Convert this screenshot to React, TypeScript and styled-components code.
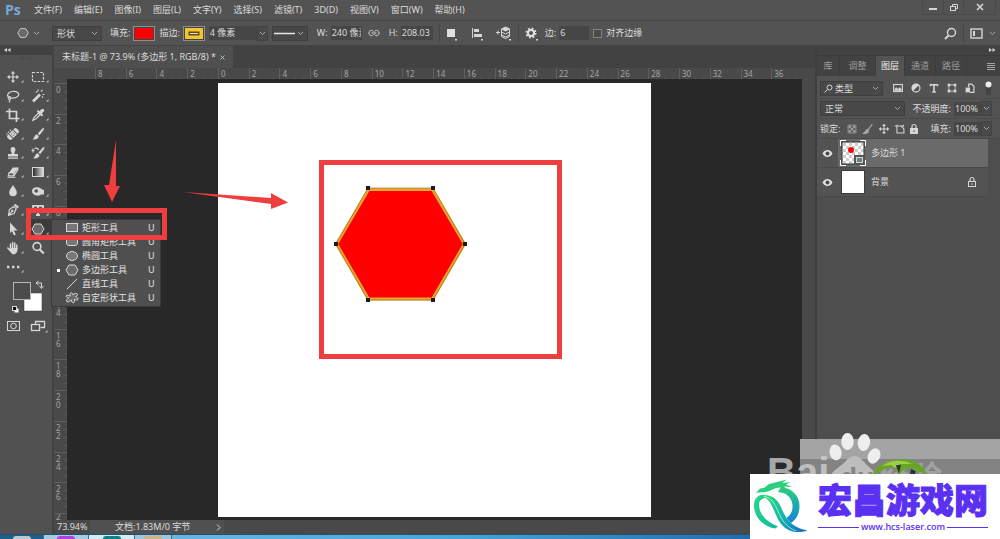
import React from "react";
import styled, { createGlobalStyle } from "styled-components";

const RED = "#ee3e3e";
const ICON = "#d6d6d6";

const GlobalStyle = createGlobalStyle`
  * { box-sizing: border-box; }
  body {
    margin: 0;
    background: #535353;
    color: #dcdcdc;
    font: 9px/14px "Noto Sans", "Noto Sans CJK SC", sans-serif;
  }
  button, input, select { font: inherit; color: inherit; }
  button { background: none; border: 0; padding: 0; }
  svg { display: block; flex: none; }
  ul { margin: 0; padding: 0; list-style: none; }
`;

const Window = styled.div`
  position: relative;
  display: flex;
  flex-direction: column;
  min-height: 100vh;
  overflow: hidden;
`;

/* ---------- menu bar ---------- */

const MenuBar = styled.header`
  display: flex;
  align-items: center;
  height: 21px;
  padding-left: 5px;
  border-bottom: 1px solid #434343;
  white-space: nowrap;
`;

const Brand = styled.span`
  width: 29px;
  color: #78aad8;
  font: bold 14px/20px "Open Sans", sans-serif;
`;

const Menus = styled.nav`
  display: flex;
  flex: 1;
  gap: 12px;
`;

const WindowControls = styled.div`
  display: flex;
  align-self: flex-start;
  margin-right: 4px;
  border: 1px solid #4a4a4a;
  border-top: 0;
`;

const WindowButton = styled.button<{ $wide?: boolean }>`
  display: grid;
  place-items: center;
  width: ${(p) => (p.$wide ? 32 : 20)}px;
  height: 14px;
  & + & { border-left: 1px solid #4a4a4a; }
`;

/* ---------- options bar ---------- */

const OptionsBar = styled.div`
  display: flex;
  align-items: center;
  height: 25px;
  padding: 0 4px 0 16px;
  border-bottom: 1px solid #434343;
  white-space: nowrap;
`;

const Group = styled.div<{ $gap?: number; $ml?: number }>`
  display: flex;
  align-items: center;
  gap: ${(p) => p.$gap ?? 3}px;
  margin-left: ${(p) => p.$ml ?? 0}px;
`;

const Divider = styled.span`
  width: 1px;
  height: 18px;
  margin: 0 6px;
  background: #464646;
`;

const Spacer = styled.span`
  flex: 1;
`;

const SelectFrame = styled.span<{ $w: number }>`
  display: grid;
  align-items: center;
  width: ${(p) => p.$w}px;
  height: 15px;
  background: #484848;
  border: 1px solid #3f3f3f;
  & > * { grid-area: 1 / 1; }
  & > svg { justify-self: end; margin-right: 3px; pointer-events: none; }
`;

const Select = styled.select<{ $pad?: number }>`
  appearance: none;
  width: 100%;
  height: 13px;
  padding: 0 0 0 ${(p) => p.$pad ?? 4}px;
  border: 0;
  background: none;
  line-height: 13px;
  outline: none;
`;

const Field = styled.input<{ $w: number }>`
  width: ${(p) => p.$w}px;
  height: 14px;
  padding: 0 1px;
  border: 0;
  background: #464646;
  line-height: 14px;
  outline: none;
`;

const Arrow = styled.button`
  display: grid;
  place-items: center;
  width: 11px;
  height: 15px;
  background: #4a4a4a;
  border: 1px solid #424242;
`;

const Swatch = styled.button<{ $color: string }>`
  display: grid;
  place-items: center;
  width: 22px;
  height: 15px;
  background: ${(p) => p.$color};
  border: 1px solid #8f8f8f;
  outline: 1px solid #444;
  outline-offset: -2px;
`;

const IconButton = styled.button`
  display: grid;
  place-items: center;
`;

const Check = styled.input`
  appearance: none;
  width: 9px;
  height: 9px;
  margin: 0;
  border: 1px solid #808080;
  background: #4a4a4a;
`;

/* ---------- body ---------- */

const Body = styled.div`
  display: flex;
  flex: 1;
`;

const Toolbox = styled.aside`
  position: relative;
  z-index: 2;
  width: 54px;
  background: #515151;
  border-right: 2px solid #424242;
`;

const Collapse = styled.button<{ $right?: boolean }>`
  display: flex;
  align-items: center;
  justify-content: ${(p) => (p.$right ? "flex-end" : "flex-start")};
  width: 100%;
  height: 9px;
  padding: 0 4px;
  background: #424242;
`;

const Grip = styled.div`
  width: 13px;
  height: 3px;
  margin: 2px 0 7px 19px;
  background: repeating-linear-gradient(90deg, #464646 0 1px, #555 1px 2px);
`;

const ToolGrid = styled.div`
  display: grid;
  grid-template-columns: repeat(2, 25px);
  grid-auto-rows: 19px;
  padding-left: 1px;
`;

const ToolButton = styled.button<{ $active?: boolean }>`
  background: ${(p) => (p.$active ? "#3b3b3b" : "none")};
`;

const ColorArea = styled.button`
  display: block;
  padding-left: 1px;
`;

const Flyout = styled.ul`
  position: absolute;
  left: 51px;
  top: 173px;
  width: 110px;
  padding: 1px 0;
  background: #4f4f4f;
  border: 1px solid #3a3a3a;
`;

const FlyoutItem = styled.button`
  display: grid;
  grid-template-columns: 8px 16px 1fr 12px;
  column-gap: 2px;
  align-items: center;
  width: 100%;
  height: 14px;
  padding-left: 2px;
  text-align: left;
  color: #e2e2e2;
`;

const Bullet = styled.span<{ $on: boolean }>`
  width: 3px;
  height: 3px;
  margin-left: 3px;
  background: ${(p) => (p.$on ? "#fff" : "transparent")};
`;

const ToolMark = styled.div`
  position: absolute;
  left: 26px;
  top: 162px;
  width: 141px;
  height: 32px;
  border: 5px solid ${RED};
  pointer-events: none;
`;

/* ---------- document ---------- */

const DocumentPane = styled.main`
  display: flex;
  flex: 1;
  flex-direction: column;
  min-width: 0;
  background: #424242;
`;

const TabRow = styled.div`
  display: flex;
  height: 22px;
`;

const DocTab = styled.div`
  display: flex;
  align-items: center;
  gap: 4px;
  padding: 0 8px;
  background: #4f4f4f;
  white-space: nowrap;
`;

const RulerTop = styled.div`
  display: grid;
  grid-template-columns: repeat(23, 1fr);
  height: 11px;
  padding: 0 13px 0 41px;
  background: #494949;
`;

const tick = "#5f5f5f";

const CellTop = styled.span`
  padding-left: 2px;
  border-left: 1px solid ${tick};
  color: #a4a4a4;
  font-size: 8px;
  line-height: 12px;
  background:
    repeating-linear-gradient(90deg, transparent 0 7px, ${tick} 7px 8px) bottom / 100% 2px no-repeat;
`;

const Workspace = styled.div`
  display: flex;
  flex: 1;
`;

const RulerLeft = styled.div`
  display: grid;
  grid-template-rows: repeat(14, 1fr) 7px;
  width: 13px;
  padding-top: 4px;
  background: #494949;
`;

const CellLeft = styled.span`
  overflow: hidden;
  min-height: 0;
  border-top: 1px solid ${tick};
  padding: 2px 7px 0 2px;
  color: #a4a4a4;
  font-size: 8px;
  line-height: 8px;
  word-break: break-all;
  background:
    repeating-linear-gradient(180deg, transparent 0 7px, ${tick} 7px 8px) right / 2px 100% no-repeat;
  &:last-child { padding-top: 0; line-height: 6px; }
`;

const Stage = styled.div`
  display: flex;
  flex: 1;
  justify-content: center;
  padding: 4px 0 3px;
  background: #282828;
`;

const Paper = styled.div`
  width: 433px;
  min-height: 434px;
  background: #fff;
  & > svg { overflow: visible; position: relative; z-index: 1; }
`;

const ScrollTrack = styled.div`
  width: 13px;
  background: #494949;
`;

const StatusBar = styled.footer`
  display: flex;
  align-items: center;
  height: 14px;
  padding-left: 3px;
  background: #494949;
  white-space: nowrap;
`;

const Zoom = styled.span`
  width: 33px;
`;

const DocInfo = styled.span`
  display: flex;
  align-items: center;
  justify-content: space-between;
  width: 134px;
  padding: 0 3px 0 25px;
  background: #505050;
`;

/* ---------- panels ---------- */

const Panels = styled.aside`
  display: flex;
  flex-direction: column;
  width: 185px;
  background: #4e4e4e;
  border-left: 2px solid #3e3e3e;
`;

const PanelTabs = styled.div`
  display: flex;
  height: 21px;
  background: #424242;
  border-top: 1px solid #3a3a3a;
`;

const PanelTab = styled.button<{ $active?: boolean; $w: number }>`
  width: ${(p) => p.$w}px;
  color: ${(p) => (p.$active ? "#f0f0f0" : "#9c9c9c")};
  background: ${(p) => (p.$active ? "#535353" : "none")};
  border-right: 1px solid #3c3c3c;
`;

const PanelMenu = styled.button`
  display: grid;
  flex: 1;
  place-items: center end;
  padding-right: 5px;
`;

const PanelRow = styled.div`
  display: flex;
  align-items: center;
  height: 20px;
  padding: 0 8px 0 3px;
  background: #535353;
  border-bottom: 1px solid #4a4a4a;
  white-space: nowrap;
`;

const FilterRow = styled(PanelRow)`
  height: 23px;
  padding-top: 2px;
`;

const Layer = styled.li`
  display: flex;
  height: 29px;
  margin-right: 12px;
  border-bottom: 1px solid #4a4a4a;
  background: #535353;
`;

const Eye = styled.button`
  display: grid;
  place-items: center;
  width: 21px;
`;

const LayerBody = styled.div<{ $active?: boolean }>`
  display: flex;
  flex: 1;
  align-items: center;
  gap: 5px;
  padding: 0 11px 0 2px;
  background: ${(p) => (p.$active ? "#6a6a6a" : "none")};
`;

const LayerName = styled.span`
  flex: 1;
`;

/* ---------- desktop ---------- */

const Taskbar = styled.div`
  display: flex;
  height: 5px;
  background: linear-gradient(90deg, #7cc0e4 0, #4aa6d8 45%, #1f66a8 78%);
  border-top: 1px solid #24506f;
`;

const Task = styled.span<{ $w: number; $bg: string; $mark: string }>`
  display: grid;
  justify-content: center;
  align-items: end;
  width: ${(p) => p.$w}px;
  background: ${(p) => p.$bg};
  border-right: 1px solid #3a7191;
  &::after {
    content: "";
    width: 18px;
    height: 3px;
    border-radius: 6px 6px 0 0;
    background: ${(p) => p.$mark};
  }
`;

const Corner = styled.div`
  position: absolute;
  right: 0;
  bottom: 0;
  z-index: 3;
`;

const SiteCard = styled.a`
  position: absolute;
  right: 0;
  bottom: 0;
  display: flex;
  width: 250px;
  height: 65px;
  background: #fff;
  color: #5a30f2;
  text-decoration: none;
`;

const SiteText = styled.div`
  display: flex;
  flex-direction: column;
  padding: 4px 0 0 1px;
`;

const SiteName = styled.strong`
  font: 900 34px/42px "Noto Sans CJK SC", sans-serif;
  -webkit-text-stroke: 1px #5a30f2;
  white-space: nowrap;
`;

const SiteUrl = styled.span`
  display: grid;
  grid-template-columns: 1fr auto 1fr;
  align-items: center;
  gap: 2px;
  font: 600 9px/14px "Open Sans", sans-serif;
  &::before, &::after {
    content: "";
    height: 1px;
    background: #5a30f2;
  }
`;

/* ---------- icons ---------- */

const Chevron = () => (
  <svg width="7" height="5" viewBox="0 0 7 5" fill="none" stroke="#a9a9a9">
    <path d="M1 1l2.5 2.5L6 1" />
  </svg>
);

const Hexagon = () => <path d="M5 3h6l3 5-3 5H5L2 8z" fill="#6a6a6a" stroke={ICON} />;

const line = { fill: "none", stroke: ICON, strokeWidth: 1.2 };

const MoveGlyph = () => (
  <path
    fill={ICON}
    d="M8 2l2.2 2.6H8.6v2.8h2.8V5.8L14 8l-2.6 2.2V8.6H8.6v2.8h1.6L8 14l-2.2-2.6h1.6V8.6H4.6v1.6L2 8l2.6-2.2v1.6h2.8V4.6H5.8z"
  />
);

const tools: { label: string; icon: React.ReactNode; corner?: boolean; active?: boolean }[] = [
  { label: "移动工具", icon: <MoveGlyph /> },
  { label: "矩形选框工具", icon: <rect x="2.5" y="3.5" width="11" height="9" {...line} strokeDasharray="2.5 1.4" /> },
  {
    label: "套索工具",
    icon: (
      <g {...line}>
        <path d="M4.5 9.8C1.5 8.5 2 4.5 7 3.5c5-.8 8 1.8 6.2 4.3C11.5 10.2 7.5 10.5 5 9.5" />
        <circle cx="4.5" cy="10" r="1.3" />
        <path d="M4.5 11.5c.8 1 .3 2-.5 2.8" />
      </g>
    ),
  },
  {
    label: "魔棒工具",
    icon: (
      <g stroke={ICON} fill="none">
        <path d="M3 13.5L10 6.5" strokeWidth="2.6" />
        <path d="M8 1.5v2M12.5 2L11 3.5M14.5 6.5h-2M6 3.5l1 1M13 9.5l-1-1" strokeWidth="1.2" />
      </g>
    ),
  },
  { label: "裁剪工具", icon: <path d="M1 4.5h10.5V15M4.5 1.5v10H14.5" {...line} strokeWidth="1.7" /> },
  {
    label: "吸管工具",
    icon: (
      <g>
        <path d="M9 5.5L4 10.5 2.8 13.4 5.7 12l5-4.8" {...line} />
        <path d="M8 4.2L12 8.2" stroke={ICON} strokeWidth="2" strokeLinecap="round" />
        <path d="M10 6L12.6 3.4" stroke={ICON} strokeWidth="3.2" strokeLinecap="round" />
      </g>
    ),
  },
  {
    label: "修复画笔工具",
    icon: (
      <g transform="rotate(-45 8 8)">
        <rect x="1.5" y="5" width="13" height="6" rx="2" fill={ICON} />
        <path d="M5 5v6M11 5v6" stroke="#515151" />
        <path d="M6.8 7h.8M8.8 7h.8M6.8 9h.8M8.8 9h.8" stroke="#515151" />
        <path d="M3 3.5h7" stroke={ICON} strokeDasharray="1.5 1" />
      </g>
    ),
  },
  {
    label: "画笔工具",
    icon: (
      <path
        fill={ICON}
        d="M13.8 2.2c.6.5.2 1.2-.2 1.8L9.5 9.2 7.8 7.6l4.6-5c.5-.5 1-.7 1.4-.4zM7 8.2l1.8 1.7c0 2.6-2.8 4-6.3 3.3C4.7 12.2 4 9 7 8.2z"
      />
    ),
  },
  {
    label: "仿制图章工具",
    icon: (
      <path fill={ICON} d="M8 2a2.5 2.5 0 0 1 2.3 3.5L9.3 8v1H13v2.5H3V9h3.7V8l-1-2.5A2.5 2.5 0 0 1 8 2zM3 12.5h10v1.2H3z" />
    ),
  },
  {
    label: "历史记录画笔工具",
    icon: (
      <g>
        <path
          fill={ICON}
          d="M14.3 2.2c.5.5.2 1.2-.2 1.8l-4 5.2-1.7-1.6 4.5-5c.5-.5 1-.7 1.4-.4zM7.6 8.2l1.8 1.7c0 2.6-2.8 4-6.3 3.3C5.3 12.2 4.6 9 7.6 8.2z"
        />
        <path d="M1.5 5.5h3M4.5 3.5C6.5 2.8 8 3.5 8.5 5M3 3.5v4" {...line} />
      </g>
    ),
  },
  {
    label: "橡皮擦工具",
    icon: (
      <g>
        <path d="M7.8 3.5h5L8.8 9h-5z" fill={ICON} />
        <path d="M12.8 3.5v2.3L8.8 11.8h-5.5L3.8 9h5l4-5.5M8.8 9v2.8" {...line} />
        <path d="M2.5 13.3h8" stroke={ICON} />
      </g>
    ),
  },
  { label: "渐变工具", icon: <rect x="2.5" y="3.5" width="11" height="9" fill="url(#ramp)" stroke={ICON} /> },
  { label: "模糊工具", icon: <path fill={ICON} d="M8 2c1.5 2.8 3.8 4.8 3.8 7.5a3.8 3.8 0 0 1-7.6 0C4.2 6.8 6.5 4.8 8 2z" /> },
  {
    label: "海绵工具",
    icon: (
      <path
        fill={ICON}
        fillRule="evenodd"
        d="M2 7.5C2.5 4.5 6 3.5 9 4.5c2 .7 3.5 2.5 5 2.5v4.5h-3l-1 1H6C3.5 12 1.7 10 2 7.5zM6.2 6.2a1.8 1.8 0 1 0 0 3.6 1.8 1.8 0 0 0 0-3.6z"
      />
    ),
  },
  {
    label: "钢笔工具",
    icon: (
      <g transform="rotate(40 8 8)">
        <path d="M8 15L5 10l1.3-5h3.4L11 10z M8 15v-5" {...line} />
        <circle cx="8" cy="9" r="1.2" fill={ICON} />
        <path d="M5.5 2.8h5" stroke={ICON} strokeWidth="2" />
      </g>
    ),
  },
  { label: "文字工具", icon: <path d="M3 6V3.8h10V6M8 4v9M6 13h4" fill="none" stroke={ICON} strokeWidth="1.8" /> },
  { label: "路径选择工具", icon: <path fill={ICON} d="M5 1.5l7.5 8H8.8l2 4-1.8.9-2-4.2L5 12z" /> },
  { label: "多边形工具", icon: <Hexagon />, active: true },
  {
    label: "抓手工具",
    icon: (
      <g>
        <path
          d="M5.5 9.5V4M7.6 8V2.5M9.7 8V3M11.8 9V5M5.5 11L2.8 8"
          fill="none"
          stroke={ICON}
          strokeWidth="1.5"
          strokeLinecap="round"
        />
        <path d="M5 8h7.5c.3 3-1 6-3.2 6.3-2 .3-3-.8-4.3-3.3z" fill={ICON} />
      </g>
    ),
  },
  {
    label: "缩放工具",
    corner: false,
    icon: (
      <g {...line} strokeWidth="1.6">
        <circle cx="7" cy="6.5" r="3.9" />
        <path d="M9.8 9.5l4 4" strokeWidth="2.2" />
      </g>
    ),
  },
  { label: "编辑工具栏", icon: <path d="M2 8h2.4M7 8h2.4M12 8h2.4" stroke={ICON} strokeWidth="2.4" /> },
];

const Tool = ({ label, icon, corner = true, active }: (typeof tools)[number]) => (
  <ToolButton aria-label={label} $active={active}>
    <svg width="24" height="19" viewBox="0 0 24 19">
      <g transform="translate(4 2)">{icon}</g>
      {corner && <path d="M22.5 13v2.5H20z" fill="#bdbdbd" />}
    </svg>
  </ToolButton>
);

const shapes = [
  { label: "矩形工具", icon: <rect x="2.5" y="3.5" width="11" height="8" fill="#777" stroke={ICON} /> },
  { label: "圆角矩形工具", icon: <rect x="2.5" y="3.5" width="11" height="8" rx="2.5" fill="#777" stroke={ICON} /> },
  { label: "椭圆工具", icon: <ellipse cx="8" cy="8" rx="5.5" ry="4.5" fill="#777" stroke={ICON} /> },
  { label: "多边形工具", icon: <Hexagon /> },
  { label: "直线工具", icon: <path d="M3 13L13 3" stroke={ICON} /> },
  {
    label: "自定形状工具",
    icon: (
      <path
        d="M6.500 3.200c1-1 2-.3 2.300 1.600 1.500-1.500 4.200-1.800 4.700-.6.4 1-.6 1.800-1.900 2.500 1.800.6 2.900 1.800 2.300 2.900-.7 1-2.300.3-3.600-.5.500 1.700.2 3.600-1 3.700-1.300 0-1.800-1.400-2-2.900-1.300 1.400-3.700 2.800-4.700 1.700-.9-1 .6-2.500 2-3.500-1.500-.5-2.800-1.300-2.300-2.400.600-1 2.400-.4 4 .4-.3-1.100-.4-2.300.2-2.900z"
        fill="#6a6a6a"
        stroke={ICON}
      />
    ),
  },
];

const EyeIcon = () => (
  <svg width="11" height="9" viewBox="0 0 11 9">
    <path d="M.5 4.5C2 1.8 3.7 1 5.500 1s3.500.8 5 3.500C9 7.200 7.300 8 5.500 8S2 7.200.5 4.500z" fill="#e2e2e2" />
    <circle cx="5.5" cy="4.5" r="2" fill="#4b4b4b" />
  </svg>
);

const Lock = ({ solid }: { solid?: boolean }) => (
  <svg width="10" height="12" viewBox="0 0 10 12" fill="none" stroke={ICON}>
    <path d="M3 5.5V3.5a2 2 0 0 1 4 0v2" strokeWidth="1.2" />
    <rect x="1.5" y="5.5" width="7" height="5" fill={solid ? ICON : "none"} />
    <path d="M5 7.2v1.8" stroke={solid ? "#535353" : ICON} />
  </svg>
);

const Svg14 = ({ children }: { children: React.ReactNode }) => (
  <svg width="14" height="14" viewBox="0 0 16 16">{children}</svg>
);

const Dragon = () => (
  <svg width="67" height="65" viewBox="0 0 67 65">
    <defs>
      <linearGradient id="wing" x1="0" y1="0" x2="1" y2="1">
        <stop offset="0" stopColor="#2fdc74" />
        <stop offset=".5" stopColor="#12b7a8" />
        <stop offset="1" stopColor="#1769d2" />
      </linearGradient>
      <linearGradient id="loop" x1="0" y1="0" x2="1" y2="1">
        <stop offset="0" stopColor="#25d98a" />
        <stop offset="1" stopColor="#12b89c" />
      </linearGradient>
      <linearGradient id="ring" x1="0" y1="0" x2="0" y2="1">
        <stop offset="0" stopColor="#27cf7c" />
        <stop offset="1" stopColor="#1484dc" />
      </linearGradient>
    </defs>
    <path d="M31 13c11 1 18.500 9 18.500 19 0 8-3.500 13.500-8.500 17l-4.500-5c4-3 6.500-7 6-12.500C42 24 37 18.500 28 18z" fill="url(#ring)" />
    <path
      d="M6 19l4-4.500 4-.5 5-4 6-1.500 12-3-5 3.500 8-1-4 2.500 6 2.500-8-.5 3 3.500-7-2.500c-6 0-9 3.500-14 4.500-4 .5-6 0-10 1z"
      fill="#2bcf7d"
    />
    <path d="M15 21C8 20 3.500 25 4 32.500 4.500 43 13 52.500 25 54.500l3-2C17 48 9.500 41 9 31c-.3-3.500 2-6.500 6-7z" fill="url(#loop)" />
    <path d="M14 21c9 0 14 5 17 12 4 10 9 20 26.500 23.500C46 60.500 35 57 29 47 24 38.500 22 27 14 23z" fill="url(#wing)" />
    <path d="M14 22.500c7 1 10.500 7 13.500 13.500C31.500 46 36 53 46 57" fill="none" stroke="#bff3e4" strokeWidth=".8" />
  </svg>
);

const Watermark = () => (
  <svg width="250" height="110" viewBox="750 429 250 110">
    <rect x="800" y="439" width="200" height="20" fill="#a4a4a4" />
    <rect x="800" y="459" width="200" height="16" fill="#838383" />
    <g fill="#d2d2d2" fontWeight="bold">
      <text x="767" y="486" fontSize="40" fillOpacity=".75" fontFamily="Liberation Sans">Bai</text>
      <text x="880" y="488" fontSize="31" fillOpacity=".4" fontFamily="Noto Sans CJK SC">经验</text>
    </g>
    <g fill="#eee">
      <ellipse cx="835.5" cy="452.5" rx="6" ry="8" transform="rotate(-12 835 452)" />
      <ellipse cx="847.5" cy="441.5" rx="6.2" ry="8.5" />
      <ellipse cx="864" cy="442.5" rx="6.2" ry="8.5" transform="rotate(8 864 442)" />
      <ellipse cx="874" cy="456" rx="6" ry="8" transform="rotate(28 874 456)" />
      <path d="M830 478c2-8 10-11 15-16 6-8 13-8 19 0 4 5 11 8 13 16z" fill="#bdbdbd" />
    </g>
    <text x="840" y="487" fontSize="28" fontWeight="bold" fill="#858585" fontFamily="Liberation Sans">du</text>
    <path d="M872 475c4-9 13-14 24-15 14-3 26 3 31 14l-10-3-5-3-7 1-6 5-5-7-9 2z" fill="#68a526" />
    <path d="M882 466c8-6 20-7 30-2l-12 0-5 4-4-3z" fill="#9ccc48" />
    <path d="M896 465l5 0-2 9zM911 469l5 2-1 4h-5z" fill="#26382f" />
  </svg>
);

/* ---------- page ---------- */

const menus = ["文件(F)", "编辑(E)", "图像(I)", "图层(L)", "文字(Y)", "选择(S)", "滤镜(T)", "3D(D)", "视图(V)", "窗口(W)", "帮助(H)"];
const topNumbers = Array.from({ length: 23 }, (_, i) => Math.abs(i * 2 - 8));
const leftNumbers = [0, 2, 4, 6, 8, 10, 12, 14, 16, 18, 20, 22, 24, 26];
const anchors = [[150, 105], [215, 105], [247, 161], [215, 217], [150, 217], [118, 161]];

export default function App() {
  return (
    <Window>
      <GlobalStyle />
      <MenuBar>
        <Brand>Ps</Brand>
        <Menus>
          {menus.map((m) => (
            <button key={m}>{m}</button>
          ))}
        </Menus>
        <WindowControls>
          <WindowButton aria-label="最小化">
            <svg width="8" height="8"><path d="M0 6h8" stroke={ICON} strokeWidth="2" /></svg>
          </WindowButton>
          <WindowButton aria-label="还原">
            <svg width="10" height="9" fill="none" stroke={ICON}>
              <path d="M3.5 3V1.5h5v4H7" /><rect x="1.5" y="3.5" width="5" height="4" />
            </svg>
          </WindowButton>
          <WindowButton aria-label="关闭" $wide>
            <svg width="8" height="8"><path d="M1 1l6 6M7 1L1 7" stroke={ICON} strokeWidth="1.6" /></svg>
          </WindowButton>
        </WindowControls>
      </MenuBar>

      <OptionsBar>
        <IconButton aria-label="多边形工具"><Svg14><Hexagon /></Svg14></IconButton>
        <Group $ml={3}><Chevron /></Group>
        <Group $ml={12}>
          <SelectFrame $w={50}>
            <Select aria-label="工具模式" defaultValue="形状"><option>形状</option></Select>
            <Chevron />
          </SelectFrame>
        </Group>
        <Group $ml={8}>填充: <Swatch aria-label="填充" $color="#f00" /></Group>
        <Group $ml={4}>
          描边:
          <Swatch aria-label="描边" $color="#f5c62c">
            <svg width="12" height="5"><rect x=".5" y=".5" width="11" height="4" fill="#5a4a30" /><path d="M2 2.500h8" stroke="#f3e3b0" /></svg>
          </Swatch>
        </Group>
        <Group $ml={4} $gap={0}>
          <Field $w={48} aria-label="描边宽度" defaultValue="4 像素" />
          <Arrow aria-label="宽度选项"><Chevron /></Arrow>
        </Group>
        <Group $ml={4}>
          <SelectFrame $w={36}>
            <svg width="31" height="5"><path d="M1 2.500h21" stroke="#e8e8e8" strokeWidth="1.5" /></svg>
            <Select aria-label="描边类型" defaultValue=""><option value="" /></Select>
            <Chevron />
          </SelectFrame>
        </Group>
        <Group $ml={9}>
          <label htmlFor="w">W:</label>
          <Field $w={31} id="w" defaultValue="240 像素" />
        </Group>
        <Group $ml={6}>
          <IconButton aria-label="链接宽高">
            <svg width="12" height="8" viewBox="0 0 12 8" fill="none" stroke={ICON}>
              <path d="M5.5 2.5C4 .5 1 1 1 4s3 3.500 4.500 1.500M6.500 2.500C8 .5 11 1 11 4S8 7.500 6.500 5.500M3.500 4h5" />
            </svg>
          </IconButton>
        </Group>
        <Group $ml={9}>
          <label htmlFor="h">H:</label>
          <Field $w={32} id="h" defaultValue="208.03 像素" />
        </Group>
        <Divider />
        <Group $gap={12}>
          <IconButton aria-label="路径操作">
            <svg width="12" height="15"><rect x="1" y="3" width="8" height="8" fill="#e0e0e0" /><path d="M9 13h2v1.500H9z" fill={ICON} /></svg>
          </IconButton>
          <IconButton aria-label="路径对齐方式">
            <svg width="14" height="15">
              <path d="M2.500 2v10" stroke={ICON} /><path d="M4 3h5v3H4zM4 8h8v3H4z" fill={ICON} /><path d="M11 13h2v1.500h-2z" fill={ICON} />
            </svg>
          </IconButton>
          <IconButton aria-label="路径排列方式">
            <svg width="16" height="15" fill="none" stroke={ICON}>
              <path d="M0 6.500h4M2 4.500v4" />
              <path d="M5.500 3L9.500 1l4 2-4 2z" fill={ICON} />
              <path d="M5.500 3v3l4 2 4-2V3M5.500 6v3l4 2 4-2V6M5.500 9v1.500l4 2 4-2V9" />
              <path d="M13 13h2v1.500h-2z" fill={ICON} stroke="none" />
            </svg>
          </IconButton>
        </Group>
        <Divider />
        <IconButton aria-label="几何选项">
          <svg width="14" height="15" fill="none" stroke="#e0e0e0">
            <circle cx="6" cy="7" r="3" strokeWidth="2" /><circle cx="6" cy="7" r="4.5" strokeWidth="2" strokeDasharray="1.8 1.73" />
            <path d="M11 13h2v1.500h-2z" fill={ICON} stroke="none" />
          </svg>
        </IconButton>
        <Group $ml={6}>
          <label htmlFor="sides">边:</label>
          <Field $w={30} id="sides" defaultValue="6" />
        </Group>
        <Group $ml={4} $gap={4}>
          <Check type="checkbox" id="align" />
          <label htmlFor="align">对齐边缘</label>
        </Group>
        <Spacer />
        <IconButton aria-label="搜索">
          <svg width="13" height="13" fill="none" stroke={ICON}>
            <circle cx="7.5" cy="5.5" r="4" strokeWidth="1.4" /><path d="M4.5 8.5L1 12" strokeWidth="2" />
          </svg>
        </IconButton>
        <Divider />
        <Group $gap={6}>
          <IconButton aria-label="工作区">
            <svg width="13" height="11"><rect x="1" y="1" width="11" height="9" fill="none" stroke={ICON} strokeWidth="1.4" /><path d="M3 3h2v5H3z" fill={ICON} /></svg>
          </IconButton>
          <Chevron />
        </Group>
      </OptionsBar>

      <Body>
        <Toolbox>
          <Collapse aria-label="折叠工具栏">
            <svg width="7" height="5" fill={ICON}><path d="M3 0v4L0 2zM6.500 0v4l-3-2z" /></svg>
          </Collapse>
          <Grip />
          <ToolGrid>
            {tools.map((t) => (
              <Tool key={t.label} {...t} />
            ))}
          </ToolGrid>
          <ColorArea aria-label="前景色和背景色">
            <svg width="50" height="60" viewBox="1 276 50 60">
              <defs>
                <linearGradient id="ramp"><stop offset="0" stopColor="#222" /><stop offset="1" stopColor="#e8e8e8" /></linearGradient>
              </defs>
              <rect x="24" y="293" width="18" height="18" fill="#fff" stroke="#3c3c3c" strokeWidth=".5" />
              <rect x="13.5" y="282.5" width="17" height="17" fill="#4c4c4c" stroke="#b5b5b5" />
              <path d="M37 283h4.500v4.500M38.500 281l-2.500 2 2.500 2M39.500 286l2 2.500 2-2.500" fill="none" stroke={ICON} />
              <rect x="14.5" y="308.5" width="4" height="4" fill="#fff" />
              <rect x="12.5" y="306.5" width="4" height="4" fill="#111" stroke={ICON} />
              <rect x="7.5" y="321.5" width="12" height="9" fill="none" stroke={ICON} />
              <circle cx="13.5" cy="326" r="2.8" fill="none" stroke={ICON} />
              <path d="M35.500 324v-2.500h9v6h-4" fill="none" stroke={ICON} strokeWidth="1.3" />
              <rect x="31.5" y="324.5" width="8" height="6" fill="#515151" stroke={ICON} strokeWidth="1.3" />
              <path d="M47.500 330v2.500H45z" fill="#bdbdbd" />
            </svg>
          </ColorArea>
          <Flyout>
            {shapes.map((s) => (
              <li key={s.label}>
                <FlyoutItem>
                  <Bullet $on={s.label === "多边形工具"} />
                  <svg width="16" height="14" viewBox="0 1 16 14">{s.icon}</svg>
                  <span>{s.label}</span>
                  <span>U</span>
                </FlyoutItem>
              </li>
            ))}
          </Flyout>
          <ToolMark />
        </Toolbox>

        <DocumentPane>
          <TabRow>
            <DocTab>
              <span>未标题-1 @ 73.9% (多边形 1, RGB/8) *</span>
              <IconButton aria-label="关闭文档">
                <svg width="5" height="5"><path d="M.5.5l4 4M4.500.5l-4 4" stroke="#c0c0c0" /></svg>
              </IconButton>
            </DocTab>
          </TabRow>
          <RulerTop>
            {topNumbers.map((n, i) => (
              <CellTop key={i}>{n}</CellTop>
            ))}
          </RulerTop>
          <Workspace>
            <RulerLeft>
              {leftNumbers.map((n) => (
                <CellLeft key={n}>{n}</CellLeft>
              ))}
              <CellLeft>2</CellLeft>
            </RulerLeft>
            <Stage>
              <Paper>
                <svg width="433" height="434" viewBox="0 0 433 434">
                  <path d="M150.500 106.500h64l32 54.500-32 55h-64L118.500 161z" fill="#f00" stroke="#e8a62c" strokeWidth="3" />
                  <path d="M150 105h65l32 56-32 56h-65l-32-56z" fill="none" stroke="#8a6a2c" strokeWidth=".6" />
                  {anchors.map(([x, y]) => (
                    <rect key={`${x}-${y}`} x={x - 2} y={y - 2} width="4" height="4" fill="#1c1c1c" />
                  ))}
                  <rect x="103.5" y="79.5" width="238" height="194" fill="none" stroke={RED} strokeWidth="5" />
                  <path d="M-35 109L53 115v-5l17 9.500L53 126v-5z" fill={RED} />
                  <path d="M-102 57L-102 103h4l-8 16-8-17h5z" fill={RED} />
                </svg>
              </Paper>
            </Stage>
            <ScrollTrack />
          </Workspace>
          <StatusBar>
            <Zoom>73.94%</Zoom>
            <DocInfo>
              文档:1.83M/0 字节
              <svg width="5" height="7" fill="none" stroke={ICON}><path d="M1 .5l3 3-3 3" /></svg>
            </DocInfo>
          </StatusBar>
        </DocumentPane>

        <Panels>
          <Collapse $right aria-label="折叠面板">
            <svg width="7" height="5" fill={ICON}><path d="M0 0v4l3-2zM3.500 0v4l3-2z" /></svg>
          </Collapse>
          <PanelTabs>
            <PanelTab $w={23}>库</PanelTab>
            <PanelTab $w={36}>调整</PanelTab>
            <PanelTab $w={29} $active>图层</PanelTab>
            <PanelTab $w={31}>通道</PanelTab>
            <PanelTab $w={31}>路径</PanelTab>
            <PanelMenu aria-label="面板菜单">
              <svg width="8" height="7" fill="none"><path d="M0 .5h8M0 2.500h8M0 4.500h8M0 6.500h8" stroke="#a5a5a5" /></svg>
            </PanelMenu>
          </PanelTabs>
          <FilterRow>
            <SelectFrame $w={63}>
              <svg width="58" height="9" fill="none" stroke={ICON}><circle cx="8.5" cy="3.5" r="2.5" /><path d="M6.500 5.500l-3 3" /></svg>
              <Select $pad={14} aria-label="图层过滤" defaultValue="类型"><option>类型</option></Select>
              <Chevron />
            </SelectFrame>
            <Group $ml={8} $gap={4}>
              <IconButton aria-label="像素图层">
                <Svg14><rect x="3" y="4" width="10" height="8" fill="none" stroke={ICON} strokeWidth="1.3" /><path d="M4 11V9l2-2 2 2 2-2 2 2v2z" fill={ICON} /></Svg14>
              </IconButton>
              <IconButton aria-label="调整图层">
                <Svg14><circle cx="8" cy="8" r="4.5" fill="none" stroke={ICON} strokeWidth="1.3" /><path d="M11.5 4.5A4.8 4.8 0 1 0 4.5 11.5z" fill={ICON} /></Svg14>
              </IconButton>
              <IconButton aria-label="文字图层">
                <Svg14><path d="M4 6V4.200h8V6M8 4v9M6 12.500h4" fill="none" stroke={ICON} strokeWidth="1.8" /></Svg14>
              </IconButton>
              <IconButton aria-label="形状图层">
                <Svg14><path d="M4.500 4.500h7v7h-7z" fill="none" stroke={ICON} /><path d="M3 3h3v3H3zM10 3h3v3h-3zM3 10h3v3H3zM10 10h3v3h-3z" fill={ICON} /></Svg14>
              </IconButton>
              <IconButton aria-label="智能对象">
                <Svg14><path d="M6.500 7V3.500h3.500L12.500 6v7H8" fill="none" stroke={ICON} strokeWidth="1.3" /><path d="M3 7.500h5V13H3z" fill={ICON} /></Svg14>
              </IconButton>
            </Group>
            <Spacer />
            <IconButton aria-label="过滤开关">
              <svg width="7" height="14"><rect x="1" y="4" width="5" height="10" rx="2" fill="#434343" /><circle cx="3.5" cy="3.5" r="3" fill="#eee" /></svg>
            </IconButton>
          </FilterRow>
          <PanelRow>
            <SelectFrame $w={85}>
              <Select aria-label="混合模式" defaultValue="正常"><option>正常</option></Select>
              <Chevron />
            </SelectFrame>
            <Spacer />
            <Group $gap={3}>
              <label htmlFor="opacity">不透明度:</label>
              <Group $gap={0}><Field $w={27} id="opacity" defaultValue="100%" /><Arrow aria-label="不透明度滑块"><Chevron /></Arrow></Group>
            </Group>
          </PanelRow>
          <PanelRow>
            锁定:
            <Group $gap={2} $ml={5}>
              <IconButton aria-label="锁定透明像素">
                <Svg14><path d="M3.500 3.500h9v9h-9z" fill="none" stroke="#999" /><path d="M4 4h3v3H4zM9 4h3v3H9zM6.500 6.500h3v3h-3zM4 9h3v3H4zM9 9h3v3H9z" fill="#999" /></Svg14>
              </IconButton>
              <IconButton aria-label="锁定图像像素">
                <Svg14><path d="M13 2.500L8 9M7.500 8.500c-2 .5-2 3-4.500 4.500 3 .5 5.500-.5 5.500-3z" fill="#a5a5a5" stroke="#a5a5a5" strokeWidth="1.4" /></Svg14>
              </IconButton>
              <IconButton aria-label="锁定位置"><Svg14><MoveGlyph /></Svg14></IconButton>
              <IconButton aria-label="防止自动嵌套">
                <Svg14><path d="M2 4.500h10M4.500 3v9.500h8V8M9 4.500l4 4M12 3v2" {...line} /></Svg14>
              </IconButton>
              <IconButton aria-label="锁定全部"><Lock solid /></IconButton>
            </Group>
            <Spacer />
            <Group $gap={3}>
              <label htmlFor="fill">填充:</label>
              <Group $gap={0}><Field $w={27} id="fill" defaultValue="100%" /><Arrow aria-label="填充滑块"><Chevron /></Arrow></Group>
            </Group>
          </PanelRow>
          <ul>
            <Layer>
              <Eye aria-label="显示多边形 1"><EyeIcon /></Eye>
              <LayerBody $active>
                <svg width="26" height="26" viewBox="0 0 26 26">
                  <defs>
                    <pattern id="checker" width="6" height="6" patternUnits="userSpaceOnUse">
                      <path d="M0 0h6v6H0z" fill="#fff" /><path d="M0 0h3v3H0zM3 3h3v3H3z" fill="#ccc" />
                    </pattern>
                  </defs>
                  <rect x="2" y="2" width="22" height="22" fill="url(#checker)" stroke="#333" />
                  <circle cx="11" cy="10" r="3" fill="#f00" />
                  <path d="M.5 6V.5H6M20 .5h5.500V6M.5 20v5.500H6M20 25.500h5.500V20" fill="none" stroke="#fff" />
                  <rect x="14" y="15" width="11" height="10" fill="#555" />
                  <rect x="16.5" y="17.5" width="6" height="5" fill="#6b7f86" stroke={ICON} />
                </svg>
                <LayerName>多边形 1</LayerName>
              </LayerBody>
            </Layer>
            <Layer>
              <Eye aria-label="显示背景"><EyeIcon /></Eye>
              <LayerBody>
                <svg width="26" height="26"><rect x="1.5" y="1.5" width="23" height="23" fill="#fff" stroke="#3c3c3c" /></svg>
                <LayerName>背景</LayerName>
                <Lock />
              </LayerBody>
            </Layer>
          </ul>
        </Panels>
      </Body>

      <Taskbar>
        <Task $w={44} $bg="#1f5f8c" $mark="#b9c9d4" />
        <Task $w={45} $bg="#a3cbe4" $mark="#b43fe0" />
        <Task $w={46} $bg="#d3ecf6" $mark="#0f7f8a" />
        <Task $w={37} $bg="#9cc6dd" $mark="#c8b48c" />
      </Taskbar>

      <Corner>
        <Watermark />
        <SiteCard href="#">
          <Dragon />
          <SiteText>
            <SiteName>宏昌游戏网</SiteName>
            <SiteUrl>www.hcs-laser.com</SiteUrl>
          </SiteText>
        </SiteCard>
      </Corner>
    </Window>
  );
}
